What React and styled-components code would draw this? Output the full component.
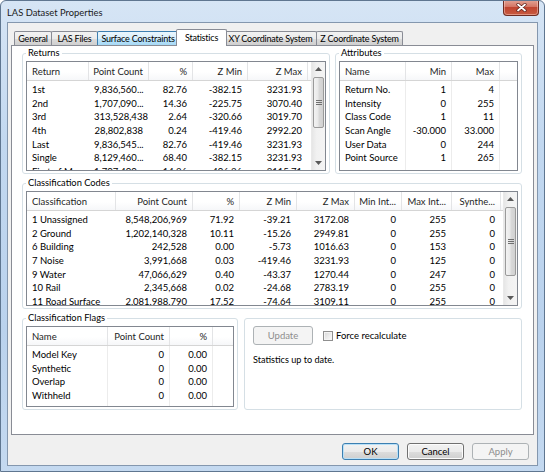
import React from "react";
import styled, { createGlobalStyle } from "styled-components";

const GlobalStyle = createGlobalStyle`
  html, body {
    margin: 0;
    padding: 0;
    background: #ffffff;
  }
  body {
    font-family: Lato, "Noto Sans", sans-serif;
    font-size: 9.5px;
    color: #000;
  }
`;

const Window = styled.div`
  width: 545px;
  height: 472px;
  box-sizing: border-box;
  display: flex;
  flex-direction: column;
  background: linear-gradient(180deg, #d6e5f5 0%, #c2d8f0 30%, #bad2ed 70%, #c4d9f0 100%);
  border: 1px solid #5f7690;
  border-radius: 6px 6px 0 0;
  overflow: hidden;
`;

const TitleBar = styled.div`
  height: 21px;
  flex-shrink: 0;
  display: flex;
  padding-left: 6px;
`;

const Title = styled.div`
  align-self: center;
  margin-top: 1px;
  color: #1a1a1a;
  font-size: 9.4px;
`;

const CloseButton = styled.div`
  margin-left: auto;
  margin-right: 5px;
  margin-top: -1px;
  width: 36px;
  height: 16px;
  box-sizing: border-box;
  border: 1px solid #6e2c22;
  border-top: none;
  border-radius: 0 0 4px 4px;
  background: linear-gradient(180deg, #e3a596 0%, #d47564 45%, #c04530 50%, #c75a40 100%);
  display: flex;
  align-items: center;
  justify-content: center;
  box-shadow: inset 0 0 0 1px rgba(255, 220, 210, 0.45);
`;

const Client = styled.div`
  flex: 1;
  margin: 0 6px 5px 6px;
  background: #f0f0f0;
  border: 1px solid #8497ae;
  display: flex;
  flex-direction: column;
  padding: 0 3px;
`;

const TabStrip = styled.div`
  margin-top: 6px;
  height: 17px;
  display: flex;
  align-items: flex-end;
  padding-left: 3px;
  position: relative;
  z-index: 2;
`;

const Tab = styled.div`
  width: ${(p) => p.$w}px;
  height: ${(p) => (p.$active ? 17 : 14)}px;
  margin-bottom: ${(p) => (p.$active ? 0 : 1)}px;
  margin-left: ${(p) => (p.$first ? 0 : p.$active ? -3 : -1)}px;
  margin-right: ${(p) => (p.$active ? -2 : 0)}px;
  box-sizing: border-box;
  border: 1px solid ${(p) => (p.$hover ? "#3c7fb1" : "#898c95")};
  border-bottom: none;
  border-radius: 2px 2px 0 0;
  position: relative;
  z-index: ${(p) => (p.$active ? 3 : p.$hover ? 2 : 1)};
  background: ${(p) =>
    p.$active
      ? "#ffffff"
      : p.$hover
      ? "linear-gradient(180deg, #eaf6fd 0%, #d9f0fc 50%, #bee6fd 51%, #a7d9f5 100%)"
      : "linear-gradient(180deg, #f2f2f2 0%, #ebebeb 50%, #dddddd 51%, #cfcfcf 100%)"};
  display: flex;
  align-items: center;
  justify-content: center;
  padding-bottom: ${(p) => (p.$active ? 2 : 0)}px;
  white-space: nowrap;
  overflow: hidden;
  font-size: 9px;
  letter-spacing: -0.2px;
`;

const TabPanel = styled.div`
  flex: 1;
  margin-top: -1px;
  border: 1px solid #898c95;
  background: #ffffff;
  padding: 1px 11px 0 10px;
  position: relative;
  z-index: 1;
`;

const TopRow = styled.div`
  display: flex;
  gap: 5px;
`;

const BottomRow = styled.div`
  display: flex;
  gap: 6px;
  margin-top: 3px;
`;

const Group = styled.fieldset`
  width: ${(p) => p.$w}px;
  box-sizing: border-box;
  min-width: 0;
  margin: ${(p) => p.$mt || 0}px 0 0 0;
  padding: 2px 3px 2px 3px;
  border: 1px solid #d5dfe5;
  border-radius: 3px;
`;

const Legend = styled.legend`
  padding: 0 2px;
  margin: 0;
  line-height: 12px;
  font-size: 9.3px;
`;

const ListFrame = styled.div`
  height: ${(p) => p.$h}px;
  box-sizing: border-box;
  border: 1px solid #828790;
  background: #fff;
  display: flex;
  overflow: hidden;
`;

const ListMain = styled.div`
  flex: 1;
  min-width: 0;
  display: flex;
  flex-direction: column;
  overflow: hidden;
`;

const HeaderRow = styled.div`
  display: flex;
  height: 19px;
  flex-shrink: 0;
  box-sizing: border-box;
  border-bottom: 1px solid #d5d5d5;
  background: linear-gradient(180deg, #ffffff 0%, #ffffff 55%, #f6f7f9 100%);
`;

const HeaderCell = styled.div`
  width: ${(p) => p.$w}px;
  flex-shrink: 0;
  box-sizing: border-box;
  padding: 0 5px;
  border-right: 1px solid #e3e4e6;
  display: flex;
  align-items: center;
  justify-content: ${(p) => (p.$right ? "flex-end" : "flex-start")};
  white-space: nowrap;
  overflow: hidden;
  color: #1e1e1e;
`;

const Fill = styled.div`
  flex: 1;
`;

const Body = styled.div`
  flex: 1;
  display: flex;
  min-height: 0;
`;

const Column = styled.div`
  width: ${(p) => p.$w}px;
  flex-shrink: 0;
  box-sizing: border-box;
  padding-top: 2px;
  border-right: 1px solid ${(p) => (p.$grid ? "#ececec" : "transparent")};
`;

const Cell = styled.div`
  height: 13.65px;
  line-height: 13.65px;
  padding: 0 5px;
  text-align: ${(p) => (p.$right ? "right" : "left")};
  white-space: nowrap;
  overflow: hidden;
`;

const VScroll = styled.div`
  width: 14px;
  flex-shrink: 0;
  display: flex;
  flex-direction: column;
  box-sizing: border-box;
  border-left: 1px solid #e9e9e9;
  background: linear-gradient(90deg, #e6e6e6 0%, #f1f1f1 35%, #f4f4f4 100%);
`;

const ArrowBox = styled.div`
  height: 14px;
  flex-shrink: 0;
  display: flex;
  align-items: center;
  justify-content: center;
`;

const Track = styled.div`
  flex: 1;
  padding: 0 1px;
`;

const Thumb = styled.div`
  margin-top: ${(p) => p.$top}px;
  height: ${(p) => p.$h}px;
  box-sizing: border-box;
  border: 1px solid #9a9a9a;
  border-radius: 2px;
  background: linear-gradient(90deg, #f3f3f3 0%, #e9e9e9 45%, #d9d9d9 55%, #d1d1d1 100%);
  display: flex;
  align-items: center;
  justify-content: center;
`;

const UpdatePanel = styled.div`
  flex: 1;
  margin-top: 6px;
  box-sizing: border-box;
  border: 1px solid #d5dfe5;
  border-radius: 3px;
  padding: 7px 8px;
`;

const ActionRow = styled.div`
  display: flex;
  align-items: center;
`;

const Button = styled.div`
  width: ${(p) => p.$w || 57}px;
  height: ${(p) => p.$h || 17}px;
  box-sizing: border-box;
  border: 1px solid ${(p) => (p.$disabled ? "#adb2b5" : p.$default ? "#3c7fb1" : "#707070")};
  border-radius: 3px;
  background: ${(p) =>
    p.$disabled
      ? "#f4f4f4"
      : "linear-gradient(180deg, #f2f2f2 0%, #ebebeb 50%, #dddddd 51%, #cfcfcf 100%)"};
  box-shadow: ${(p) =>
    p.$default ? "inset 0 0 0 1px #b9e0f7" : p.$disabled ? "none" : "inset 0 0 0 1px #fcfcfc"};
  color: ${(p) => (p.$disabled ? "#8d8d8d" : "#000")};
  display: flex;
  align-items: center;
  justify-content: center;
`;

const CheckLabel = styled.label`
  display: flex;
  align-items: center;
  margin-left: 10px;
  gap: 3px;
`;

const CheckBox = styled.span`
  width: 10px;
  height: 10px;
  box-sizing: border-box;
  border: 1px solid #8f8f8f;
  background: linear-gradient(135deg, #d7d7d7 0%, #eeeeee 60%, #fafafa 100%);
  box-shadow: inset 0 0 0 1px #f4f4f4;
`;

const Status = styled.div`
  margin-top: 9px;
  line-height: 12px;
  font-size: 9.1px;
`;

const ButtonRow = styled.div`
  display: flex;
  justify-content: flex-end;
  gap: 8px;
  padding: 8px 5px 5px 0;
`;

const Arrow = ({ down }) => (
  <svg width="7" height="4" viewBox="0 0 7 4">
    <polygon points={down ? "0,0 7,0 3.5,4" : "0,4 7,4 3.5,0"} fill="#5a5a5a" />
  </svg>
);

const Grip = () => (
  <svg width="6" height="5" viewBox="0 0 6 5">
    <path d="M0 0.5h6M0 2.5h6M0 4.5h6" stroke="#6f6f6f" strokeWidth="1" />
  </svg>
);

const ListView = ({ columns, rows, height, grid, thumb }) => (
  <ListFrame $h={height}>
    <ListMain>
      <HeaderRow>
        {columns.map((c) => (
          <HeaderCell key={c.label} $w={c.w} $right={c.r}>
            {c.label}
          </HeaderCell>
        ))}
        <Fill />
      </HeaderRow>
      <Body>
        {columns.map((c, i) => (
          <Column key={c.label} $w={c.w} $grid={grid}>
            {rows.map((row, j) => (
              <Cell key={j} $right={c.r}>
                {row[i]}
              </Cell>
            ))}
          </Column>
        ))}
        <Fill />
      </Body>
    </ListMain>
    {thumb && (
      <VScroll>
        <ArrowBox>
          <Arrow />
        </ArrowBox>
        <Track>
          <Thumb $top={thumb.top} $h={thumb.h}>
            <Grip />
          </Thumb>
        </Track>
        <ArrowBox>
          <Arrow down />
        </ArrowBox>
      </VScroll>
    )}
  </ListFrame>
);

const tabs = [
  { label: "General", w: 38 },
  { label: "LAS Files", w: 47 },
  { label: "Surface Constraints", w: 82, hover: true },
  { label: "Statistics", w: 51, active: true },
  { label: "XY Coordinate System", w: 93 },
  { label: "Z Coordinate System", w: 87 },
];

const returnCols = [
  { label: "Return", w: 62 },
  { label: "Point Count", w: 60, r: true },
  { label: "%", w: 44, r: true },
  { label: "Z Min", w: 55, r: true },
  { label: "Z Max", w: 60, r: true },
];

const returnRows = [
  ["1st", "9,836,560...", "82.76", "-382.15", "3231.93"],
  ["2nd", "1,707,090...", "14.36", "-225.75", "3070.40"],
  ["3rd", "313,528,438", "2.64", "-320.66", "3019.70"],
  ["4th", "28,802,838", "0.24", "-419.46", "2992.20"],
  ["Last", "9,836,545...", "82.76", "-419.46", "3231.93"],
  ["Single", "8,129,460...", "68.40", "-382.15", "3231.93"],
  ["First of M...", "1,707,400...", "14.36", "-406.36", "3115.71"],
];

const attrCols = [
  { label: "Name", w: 66 },
  { label: "Min", w: 46, r: true },
  { label: "Max", w: 48, r: true },
];

const attrRows = [
  ["Return No.", "1", "4"],
  ["Intensity", "0", "255"],
  ["Class Code", "1", "11"],
  ["Scan Angle", "-30.000", "33.000"],
  ["User Data", "0", "244"],
  ["Point Source", "1", "265"],
];

const classCols = [
  { label: "Classification", w: 89 },
  { label: "Point Count", w: 77, r: true },
  { label: "%", w: 47, r: true },
  { label: "Z Min", w: 57, r: true },
  { label: "Z Max", w: 58, r: true },
  { label: "Min Int...", w: 47, r: true },
  { label: "Max Int...", w: 50, r: true },
  { label: "Synthe...", w: 49, r: true },
];

const classRows = [
  ["1  Unassigned", "8,548,206,969", "71.92", "-39.21", "3172.08", "0", "255", "0"],
  ["2  Ground", "1,202,140,328", "10.11", "-15.26", "2949.81", "0", "255", "0"],
  ["6  Building", "242,528", "0.00", "-5.73", "1016.63", "0", "153", "0"],
  ["7  Noise", "3,991,668", "0.03", "-419.46", "3231.93", "0", "125", "0"],
  ["9  Water", "47,066,629", "0.40", "-43.37", "1270.44", "0", "247", "0"],
  ["10  Rail", "2,345,668", "0.02", "-24.68", "2783.19", "0", "255", "0"],
  ["11  Road Surface", "2,081,988,790", "17.52", "-74.64", "3109.11", "0", "255", "0"],
];

const flagCols = [
  { label: "Name", w: 81 },
  { label: "Point Count", w: 62, r: true },
  { label: "%", w: 43, r: true },
];

const flagRows = [
  ["Model Key", "0", "0.00"],
  ["Synthetic", "0", "0.00"],
  ["Overlap", "0", "0.00"],
  ["Withheld", "0", "0.00"],
];

const App = () => (
  <>
    <GlobalStyle />
    <Window>
      <TitleBar>
        <Title>LAS Dataset Properties</Title>
        <CloseButton>
          <svg width="11" height="9" viewBox="0 0 11 9">
            <path d="M2 1.5L9 7.5M9 1.5L2 7.5" stroke="#5a2018" strokeWidth="3.2" strokeLinecap="round" />
            <path d="M2 1.5L9 7.5M9 1.5L2 7.5" stroke="#ffffff" strokeWidth="1.8" strokeLinecap="round" />
          </svg>
        </CloseButton>
      </TitleBar>
      <Client>
        <TabStrip>
          {tabs.map((t, i) => (
            <Tab key={t.label} $w={t.w} $first={i === 0} $active={t.active} $hover={t.hover}>
              {t.label}
            </Tab>
          ))}
        </TabStrip>
        <TabPanel>
          <TopRow>
            <Group $w={308}>
              <Legend>Returns</Legend>
              <ListView columns={returnCols} rows={returnRows} height={110} thumb={{ top: 1, h: 51 }} />
            </Group>
            <Group $w={187}>
              <Legend>Attributes</Legend>
              <ListView columns={attrCols} rows={attrRows} height={110} grid />
            </Group>
          </TopRow>
          <Group $w={500} $mt={3}>
            <Legend>Classification Codes</Legend>
            <ListView columns={classCols} rows={classRows} height={115} thumb={{ top: 1, h: 69 }} />
          </Group>
          <BottomRow>
            <Group $w={216}>
              <Legend>Classification Flags</Legend>
              <ListView columns={flagCols} rows={flagRows} height={81} grid />
            </Group>
            <UpdatePanel>
              <ActionRow>
                <Button $w={60} $h={19} $disabled>
                  Update
                </Button>
                <CheckLabel>
                  <CheckBox />
                  Force recalculate
                </CheckLabel>
              </ActionRow>
              <Status>Statistics up to date.</Status>
            </UpdatePanel>
          </BottomRow>
        </TabPanel>
        <ButtonRow>
          <Button $default>OK</Button>
          <Button>Cancel</Button>
          <Button $disabled>Apply</Button>
        </ButtonRow>
      </Client>
    </Window>
  </>
);

export default App;
